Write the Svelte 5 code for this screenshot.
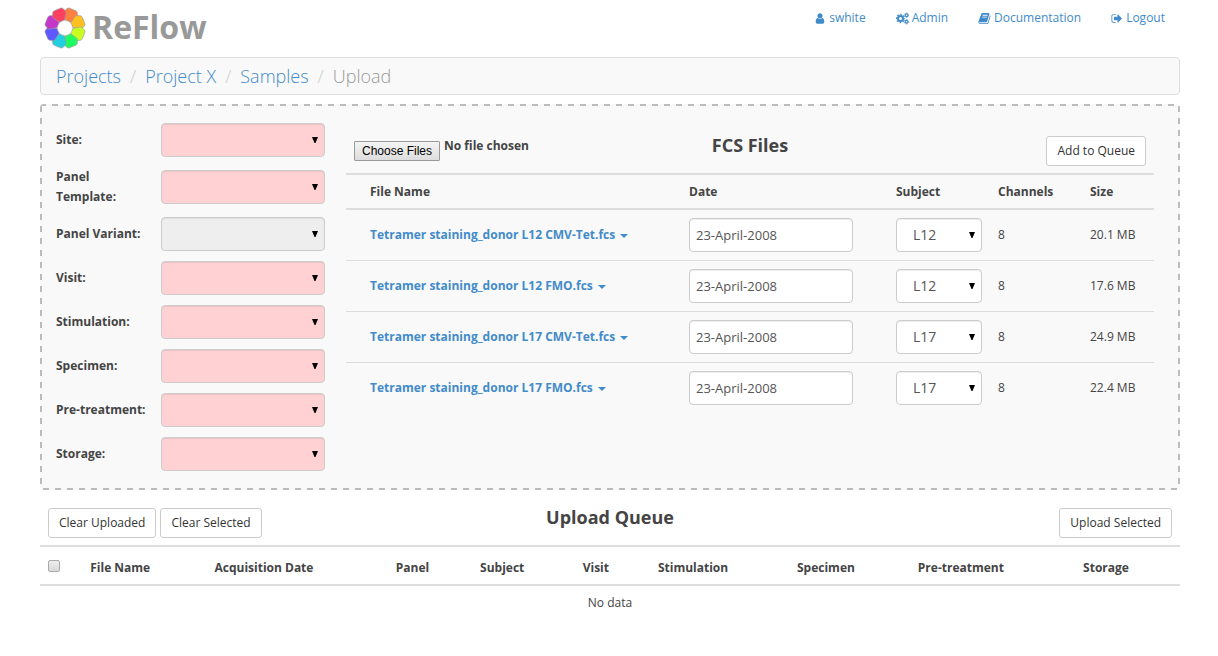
<script>
  const petals = ['#ff8040', '#ffc120', '#c9ff20', '#20ff60', '#20cfe0', '#6058ff', '#c338c8', '#ff4060'];

  const trail = ['Projects', 'Project X', 'Samples'];

  const fields = [
    { id: 'site', label: 'Site:' },
    { id: 'template', label: 'Panel Template:' },
    { id: 'variant', label: 'Panel Variant:', disabled: true },
    { id: 'visit', label: 'Visit:' },
    { id: 'stimulation', label: 'Stimulation:' },
    { id: 'specimen', label: 'Specimen:' },
    { id: 'pretreatment', label: 'Pre-treatment:' },
    { id: 'storage', label: 'Storage:' }
  ];

  const subjects = ['L12', 'L17'];

  let files = $state([
    { name: 'Tetramer staining_donor L12 CMV-Tet.fcs', date: '23-April-2008', subject: 'L12', channels: 8, size: '20.1 MB' },
    { name: 'Tetramer staining_donor L12 FMO.fcs', date: '23-April-2008', subject: 'L12', channels: 8, size: '17.6 MB' },
    { name: 'Tetramer staining_donor L17 CMV-Tet.fcs', date: '23-April-2008', subject: 'L17', channels: 8, size: '24.9 MB' },
    { name: 'Tetramer staining_donor L17 FMO.fcs', date: '23-April-2008', subject: 'L17', channels: 8, size: '22.4 MB' }
  ]);

  // Queue columns with their share of the table width, in percent.
  const queueColumns = [
    ['File Name', 10.9],
    ['Acquisition Date', 15.9],
    ['Panel', 7.4],
    ['Subject', 9],
    ['Visit', 6.6],
    ['Stimulation', 12.2],
    ['Specimen', 10.6],
    ['Pre-treatment', 14.5],
    ['Storage', 9.2]
  ];
</script>

<div class="page">
  <header>
    <a class="brand" href="#home">
      <svg class="logo" viewBox="-21 -21 42 42" aria-hidden="true">
        {#each petals as color, i}
          <path
            transform="rotate({22.5 + i * 45})"
            fill={color}
            stroke="#999"
            stroke-width="0.6"
            d="M-2.6 -7.4 L-6.6 -13.2 Q-7.4 -14.6 -7 -15.6 L-5.6 -18.6 Q-5 -20 -3.4 -20 L3.4 -20 Q5 -20 5.6 -18.6 L7 -15.6 Q7.4 -14.6 6.6 -13.2 L2.6 -7.4 Z"
          />
        {/each}
        <circle r="7.5" fill="#fff" stroke="#aaa" stroke-width="0.5" />
      </svg>
      <span>ReFlow</span>
    </a>
    <nav>
      <a href="#user">
        <svg class="icon" viewBox="0 0 1792 1792" aria-hidden="true"><path d="M1536 1399q0 109-62.5 187t-150.5 78h-854q-88 0-150.5-78t-62.5-187q0-85 8.5-160.5t31.5-152 58.5-131 94-89 134.5-34.5q131 128 313 128t313-128q76 0 134.5 34.5t94 89 58.5 131 31.5 152 8.5 160.5zm-256-887q0 159-112.5 271.5t-271.5 112.5-271.5-112.5-112.5-271.5 112.5-271.5 271.5-112.5 271.5 112.5 112.5 271.5z" /></svg>
        swhite
      </a>
      <a href="#admin">
        <svg class="icon wide" viewBox="0 0 26 26" aria-hidden="true">
          <g fill="none" stroke="currentColor">
            <circle cx="9" cy="13" r="5" stroke-width="4" />
            <circle cx="9" cy="13" r="8" stroke-width="2.6" stroke-dasharray="3.2 3.08" stroke-dashoffset="1.6" />
            <circle cx="21" cy="6.5" r="2.7" stroke-width="2.2" />
            <circle cx="21" cy="6.5" r="4.4" stroke-width="1.6" stroke-dasharray="2.4 2.2" />
            <circle cx="21" cy="19.5" r="2.7" stroke-width="2.2" />
            <circle cx="21" cy="19.5" r="4.4" stroke-width="1.6" stroke-dasharray="2.4 2.2" />
          </g>
        </svg>
        Admin
      </a>
      <a href="#docs">
        <svg class="icon wide" viewBox="0 0 1792 1792" aria-hidden="true"><path d="M1703 478q40 57 18 129l-275 906q-19 64-76.5 107.5t-122.5 43.5h-923q-77 0-148.5-53.5t-99.5-131.5q-24-67-2-127 0-4 3-27t4-37q1-8-3-21.5t-3-19.5q2-11 8-21t16.5-23.5 16.5-23.5q23-38 45-91.5t30-91.5q3-10 .5-30t-.5-28q3-11 17-28t17-23q21-36 42-92t25-90q1-9-2.5-32t.5-28q4-13 22-30.5t22-22.5q19-26 42.5-84.5t27.5-96.5q1-8-3-25.5t-2-26.5q2-8 9-18t18-23 17-21q8-12 16.5-30.5t15-35 16-36 19.5-32 26.5-23.5 36-11.5 47.5 5.5l-1 3q38-9 51-9h761q74 0 114 56t18 130l-274 906q-36 119-71.5 153.5t-128.5 34.5h-869q-27 0-38 15-11 16-1 43 24 70 144 70h923q29 0 56-15.5t35-41.5l300-987q7-22 5-57 38 15 59 43zm-1064 2q-4 13 2 22.5t20 9.5h608q13 0 25.5-9.5t16.5-22.5l21-64q4-13-2-22.5t-20-9.5h-608q-13 0-25.5 9.5t-16.5 22.5zm-83 256q-4 13 2 22.5t20 9.5h608q13 0 25.5-9.5t16.5-22.5l21-64q4-13-2-22.5t-20-9.5h-608q-13 0-25.5 9.5t-16.5 22.5z" /></svg>
        Documentation
      </a>
      <a href="#logout">
        <svg class="icon" viewBox="0 0 1792 1792" aria-hidden="true"><path d="M704 1440q0 4 1 20t.5 26.5-3 23.5-10 19.5-20.5 6.5h-320q-119 0-203.5-84.5t-84.5-203.5v-704q0-119 84.5-203.5t203.5-84.5h320q13 0 22.5 9.5t9.5 22.5q0 4 1 20t.5 26.5-3 23.5-10 19.5-20.5 6.5h-320q-66 0-113 47t-47 113v704q0 66 47 113t113 47h312l11.5 1 11.5 3 8 5.5 7 9 2 13.5zm928-544q0 26-19 45l-544 544q-19 19-45 19t-45-19-19-45v-288h-448q-26 0-45-19t-19-45v-384q0-26 19-45t45-19h448v-288q0-26 19-45t45-19 45 19l544 544q19 19 19 45z" /></svg>
        Logout
      </a>
    </nav>
  </header>

  <ol class="breadcrumb">
    {#each trail as item}
      <li><a href="#{item}">{item}</a></li>
    {/each}
    <li>Upload</li>
  </ol>

  <main>
    <section class="chooser">
      <form class="fields">
        {#each fields as field}
          <label for={field.id}>{field.label}</label>
          <select id={field.id} class="control" class:required={!field.disabled} disabled={field.disabled}>
            <option></option>
          </select>
        {/each}
      </form>

      <div class="files">
        <div class="bar">
          <input type="file" multiple aria-label="Choose Files" />
          <h2>FCS Files</h2>
          <div class="actions end"><button type="button">Add to Queue</button></div>
        </div>
        <table class="file-table">
          <colgroup>
            <col class="c-pad" /><col class="c-name" /><col class="c-date" /><col class="c-subject" /><col class="c-channels" /><col class="c-size" />
          </colgroup>
          <thead>
            <tr><th></th><th>File Name</th><th>Date</th><th>Subject</th><th>Channels</th><th>Size</th></tr>
          </thead>
          <tbody>
            {#each files as file}
              <tr>
                <td></td>
                <td><a class="file" href="#file">{file.name}<span class="caret"></span></a></td>
                <td><input class="control date" type="text" aria-label="Date" bind:value={file.date} /></td>
                <td>
                  <select class="control subject" aria-label="Subject" bind:value={file.subject}>
                    {#each subjects as subject}<option>{subject}</option>{/each}
                  </select>
                </td>
                <td>{file.channels}</td>
                <td>{file.size}</td>
              </tr>
            {/each}
          </tbody>
        </table>
      </div>
    </section>

    <section class="queue">
      <div class="bar">
        <div class="actions">
          <button type="button">Clear Uploaded</button>
          <button type="button">Clear Selected</button>
        </div>
        <h2>Upload Queue</h2>
        <div class="actions end"><button type="button">Upload Selected</button></div>
      </div>
      <table class="queue-table">
        <colgroup>
          <col class="c-check" />
          {#each queueColumns as [name, share] (name)}
            <col style="width: {share}%" />
          {/each}
        </colgroup>
        <thead>
          <tr>
            <th><input type="checkbox" aria-label="Select all" /></th>
            {#each queueColumns as [name] (name)}
              <th>{name}</th>
            {/each}
          </tr>
        </thead>
        <tbody>
          <tr><td class="empty" colspan="10">No data</td></tr>
        </tbody>
      </table>
    </section>
  </main>
</div>

<style>
  :global(body) {
    margin: 0;
    background: #fff;
  }

  .page {
    box-sizing: border-box;
    padding: 0 38px 24px 40px;
    color: #444;
    font: 12px/20px 'Open Sans', sans-serif;
  }

  a {
    color: #428bca;
    text-decoration: none;
  }

  header {
    display: flex;
    justify-content: space-between;
    align-items: flex-start;
    height: 57px;
  }

  .brand {
    display: flex;
    align-items: flex-start;
    gap: 6px;
    padding: 7px 0 0 4px;
    color: #999;
    font-size: 32px;
    font-weight: 700;
    line-height: 40px;
  }

  .logo {
    width: 42px;
    height: 42px;
  }

  nav {
    display: flex;
    gap: 30px;
    padding: 8px 15px 0 0;
  }

  nav a {
    display: flex;
    align-items: center;
    gap: 3px;
  }

  .icon {
    width: 12px;
    height: 13px;
    fill: currentColor;
  }

  .icon.wide {
    width: 13px;
  }

  .breadcrumb {
    display: flex;
    margin: 0 0 9px;
    padding: 8px 15px;
    border: 1px solid #ddd;
    border-radius: 4px;
    background: #f9f9f9;
    color: #999;
    font-size: 18px;
    font-weight: 300;
    list-style: none;
  }

  .breadcrumb li + li::before {
    content: '/';
    padding: 0 9px;
    color: #ccc;
  }

  /* The dashed frame is painted as four repeating strips, six on and six off. */
  .chooser {
    display: grid;
    grid-template-columns: 269px 1fr;
    gap: 21px;
    padding: 19px 26px 19px 16px;
    border-radius: 4px;
    background:
      linear-gradient(90deg, #bbb 50%, transparent 50%) 0 0 / 12px 2px repeat-x,
      linear-gradient(90deg, #bbb 50%, transparent 50%) 3px 100% / 12px 2px repeat-x,
      linear-gradient(#bbb 50%, transparent 50%) 0 2px / 2px 12px repeat-y,
      linear-gradient(#bbb 50%, transparent 50%) 100% 2px / 2px 12px repeat-y,
      #f9f9f9;
  }

  .fields {
    display: grid;
    grid-template-columns: 93px 164px;
    justify-content: space-between;
    align-content: start;
    align-items: center;
    gap: 10px 0;
    font-weight: 700;
  }

  .control {
    box-sizing: border-box;
    width: 100%;
    height: 34px;
    margin: 0;
    padding: 6px;
    border: 1px solid #ccc;
    border-radius: 4px;
    background: #fff;
    box-shadow: inset 0 1px 1px rgba(0, 0, 0, 0.075);
    color: #555;
    font: 13px/20px 'Open Sans', sans-serif;
    vertical-align: middle;
  }

  select.control {
    appearance: none;
    padding: 6px 16px;
    background: #fff url("data:image/svg+xml,%3Csvg xmlns='http://www.w3.org/2000/svg' width='6' height='6'%3E%3Cpath d='M0 0h6L3.5 6h-1z'/%3E%3C/svg%3E") no-repeat right 6px center;
    font-size: 14px;
    opacity: 1;
  }

  select.required {
    background-color: #ffd1d3;
  }

  select:disabled {
    background-color: #eee;
  }

  .bar {
    display: grid;
    grid-template-columns: 1fr auto 1fr;
    align-items: start;
    padding: 0 8px 7px;
  }

  .files .bar {
    padding-top: 13px;
  }

  h2 {
    margin: 0;
    font-size: 18px;
    font-weight: 700;
    line-height: 18px;
  }

  .actions {
    display: flex;
    gap: 4px;
  }

  .end {
    justify-content: flex-end;
  }

  button {
    padding: 4px 10px;
    border: 1px solid #ccc;
    border-radius: 3px;
    background: #fff;
    color: #333;
    font: 12px/20px 'Open Sans', sans-serif;
  }

  input[type='file'] {
    min-width: 0;
    color: #444;
    font: 700 12px/20px 'Open Sans', sans-serif;
  }

  input[type='file']::file-selector-button {
    box-sizing: border-box;
    height: 20px;
    margin: 5px 4px 0 0;
    padding: 0 7px;
    border: 1px solid #999;
    border-radius: 1px;
    background: linear-gradient(#f4f4f4, #ddd);
    color: #000;
    font: 12px/18px 'Liberation Sans', sans-serif;
    vertical-align: top;
  }

  table {
    width: 100%;
    border-collapse: collapse;
    table-layout: fixed;
  }

  th,
  td {
    padding: 8px;
    text-align: left;
  }

  thead tr {
    border-top: 2px solid #ddd;
    border-bottom: 2px solid #ddd;
  }

  .file-table th {
    padding: 7px 8px 6px;
  }

  .file-table tbody tr + tr {
    border-top: 1px solid #ddd;
  }

  .c-pad { width: 16px; }
  .c-date { width: 207px; }
  .c-subject { width: 102px; }
  .c-channels { width: 92px; }
  .c-size { width: 72px; }
  .c-check { width: 42px; }

  .file {
    font-weight: 700;
  }

  .caret {
    display: inline-block;
    margin-left: 5px;
    border: 4px solid transparent;
    border-top-color: currentColor;
    border-bottom: 0;
    vertical-align: middle;
  }

  .date {
    width: 164px;
  }

  .subject {
    width: 86px;
  }

  .queue .bar {
    padding-top: 18px;
  }

  .queue-table th {
    padding: 11px 8px 6px;
  }

  .queue-table td {
    padding: 7px 8px;
  }

  input[type='checkbox'] {
    appearance: none;
    display: block;
    width: 12px;
    height: 12px;
    margin: 0 0 4px;
    border: 1px solid #aaa;
    border-radius: 2px;
    box-sizing: border-box;
    background: linear-gradient(#eee, #d8d8d8);
  }

  .queue-table .empty {
    text-align: center;
  }
</style>
